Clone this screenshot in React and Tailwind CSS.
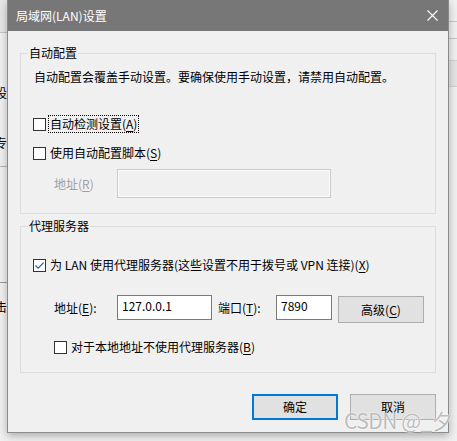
const font = "font-['Noto_Sans_CJK_SC','Noto_Sans',sans-serif]";

function Box({ checked }) {
  return (
    <span className={`w-[13px] h-[13px] shrink-0 border bg-white flex items-center justify-center ${checked ? "border-[#333333]" : "border-[#333333]"}`}>
      {checked && (
        <svg width="11" height="11" viewBox="0 0 11 11">
          <path d="M1.5 5.5 L4.2 8.2 L9.6 2.6" fill="none" stroke="#2d5c9e" strokeWidth="1.2" />
        </svg>
      )}
    </span>
  );
}

function Key({ k }) {
  return <span className="underline underline-offset-[2px] decoration-[1px]">{k}</span>;
}

export default function App() {
  return (
    <div className={`w-[457px] h-[441px] bg-[#f0f0f0] flex overflow-hidden relative text-black ${font}`}>
      {/* left background strip */}
      <div className="w-[7px] h-full shrink-0 flex flex-col bg-[#f0f0f0] overflow-hidden text-[12px] leading-4">
        <div className="h-[33px] bg-[#e6e6e6] border-b border-[#c4c4c4]" />
        <div className="h-[52px]" />
        <div className="flex justify-end whitespace-nowrap">设</div>
        <div className="h-[34px]" />
        <div className="flex justify-end whitespace-nowrap">专</div>
        <div className="h-[16px] border-b border-[#b4b4b4]" />
        <div className="h-[115px]" />
        <div className="h-[1px] bg-[#9a9a9a]" />
        <div className="h-[16px]" />
        <div className="flex justify-end whitespace-nowrap">击</div>
      </div>

      {/* dialog */}
      <div className="w-[442px] h-[433px] shrink-0 flex flex-col bg-[#f0f0f0] border-x border-b border-[#8a8a8a] shadow-[0_3px_8px_rgba(0,0,0,0.28)] z-10">
        <div className="h-[31px] bg-[#777777] flex items-center justify-between pl-[8px] pr-[10px] text-white text-[12px] leading-4">
          <span>局域网(LAN)设置</span>
          <svg width="11" height="11" viewBox="0 0 11 11">
            <path d="M0.5 0.5 L10.5 10.5 M10.5 0.5 L0.5 10.5" stroke="#ffffff" strokeWidth="1.1" />
          </svg>
        </div>

        <div className="flex flex-col px-[12px] text-[12px] leading-4">
          {/* group 1 */}
          <fieldset className="mt-[14px] border border-[#dcdcdc] p-0">
            <legend className="ml-[7px] px-[1px] leading-4">自动配置</legend>
            <div className="flex flex-col pt-[8px] pl-[12px] pb-[15px]">
              <div className="ml-[1px] h-4 whitespace-nowrap">自动配置会覆盖手动设置。要确保使用手动设置，请禁用自动配置。</div>
              <div className="mt-[30px] h-[18px] flex items-center">
                <Box />
                <span className="ml-[2px] h-[18px] border border-dotted border-black px-[1px] flex items-center">
                  自动检测设置(<Key k="A" />)
                </span>
              </div>
              <div className="mt-[11px] h-[18px] flex items-center">
                <Box />
                <span className="ml-[3px] px-[1px]">
                  使用自动配置脚本(<Key k="S" />)
                </span>
              </div>
              <div className="mt-[7px] flex items-center">
                <span className="w-[84px] pl-[21px] text-[#a0a0a0]">
                  地址(<Key k="R" />)
                </span>
                <div className="w-[214px] h-[29px] border border-[#cccccc] shadow-[inset_0_0_0_1px_#fbfbfb]" />
              </div>
            </div>
          </fieldset>

          {/* group 2 */}
          <fieldset className="mt-[4px] border border-[#dcdcdc] p-0">
            <legend className="ml-[7px] px-[1px] leading-4">代理服务器</legend>
            <div className="flex flex-col pt-[22px] pl-[12px] pb-[16px]">
              <div className="h-[18px] flex items-center">
                <Box checked />
                <span className="ml-[3px] px-[1px] whitespace-nowrap">
                  为 LAN 使用代理服务器(这些设置不用于拨号或 VPN 连接)(<Key k="X" />)
                </span>
              </div>
              <div className="mt-[21px] flex items-start">
                <span className="w-[84px] h-[25px] pl-[21px] flex items-center">
                  地址(<Key k="E" />):
                </span>
                <div className="w-[95px] h-[25px] border border-[#7a7a7a] bg-white pl-[4px] pt-[2px] leading-4">127.0.0.1</div>
                <span className="ml-[6px] w-[58px] h-[25px] flex items-center">
                  端口(<Key k="T" />):
                </span>
                <div className="w-[56px] h-[25px] border border-[#7a7a7a] bg-white pl-[4px] pt-[2px] leading-4">7890</div>
                <div className="ml-[6px] mt-[1px] w-[86px] h-[27px] border border-[#adadad] bg-[#e1e1e1] flex items-center justify-center">
                  高级(<Key k="C" />)
                </div>
              </div>
              <div className="mt-[15px] h-[18px] flex items-center pl-[21px]">
                <Box />
                <span className="ml-[3px] px-[1px]">
                  对于本地地址不使用代理服务器(<Key k="B" />)
                </span>
              </div>
            </div>
          </fieldset>

          {/* buttons */}
          <div className="mt-[21px] flex justify-end gap-[12px]">
            <div className="w-[86px] h-[26px] border-2 border-[#0078d7] bg-[#e1e1e1] flex items-center justify-center">确定</div>
            <div className="w-[86px] h-[26px] border border-[#adadad] bg-[#e1e1e1] flex items-center justify-center">取消</div>
          </div>
        </div>
      </div>

      {/* right background strip */}
      <div className="flex-1 h-full flex flex-col bg-[#f0f0f0]">
        <div className="h-[22px] border-b border-[#c8c8c8]" />
        <div className="h-[17px] border-b border-[#c8c8c8]" />
        <div className="h-[22px] border-b border-[#d0d0d0]" />
        <div className="h-[26px] bg-[#e4e4e4] border-b border-[#d0d0d0]" />
      </div>

      {/* watermark */}
      <div className="absolute left-[344px] top-[407px] z-20 text-[21px] leading-[26px] text-[#bdbdbd] whitespace-nowrap tracking-[-0.5px] [text-shadow:0_0_2px_#ffffff,0_0_1px_#ffffff] font-['Noto_Sans_CJK_SC',sans-serif]">
        CSDN @_夕
      </div>
    </div>
  );
}
